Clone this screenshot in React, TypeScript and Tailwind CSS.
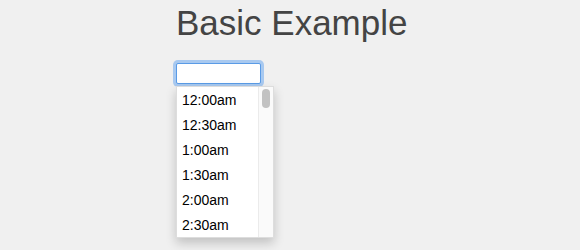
const times = ["12:00am", "12:30am", "1:00am", "1:30am", "2:00am", "2:30am"];

const App: React.FC = () => {
    return (
        <div className="min-h-screen bg-[#f0f0f0] pl-[176px] font-['Liberation_Sans',Arial,sans-serif]">
            <h1 className="pt-[6px] text-[35px] leading-[34px] text-[#444]">Basic Example</h1>
            <div className="mt-[23px]">
                <input
                    type="text"
                    className="block w-[85px] h-[21px] bg-white border border-[#5a9be6] rounded-[2px] shadow-[0_0_0_3px_rgba(120,175,240,0.6)] outline-none"
                />
                <div className="mt-[2px] flex w-[98px] h-[152px] bg-white border border-[#ddd] shadow-[0_5px_10px_rgba(0,0,0,0.2)] overflow-hidden">
                    <ul className="flex-1 pt-[1px] overflow-hidden">
                        {times.map((t) => (
                            <li key={t} className="h-[25px] pl-[5px] text-[14px] leading-[25px] text-black whitespace-nowrap">
                                {t}
                            </li>
                        ))}
                    </ul>
                    <div className="w-[15px] shrink-0 bg-[#fafafa] border-l border-[#ebebeb] pt-[2px] flex justify-center">
                        <div className="w-[8px] h-[19px] rounded-full bg-[#c2c2c2]" />
                    </div>
                </div>
            </div>
        </div>
    )
}

export default App
